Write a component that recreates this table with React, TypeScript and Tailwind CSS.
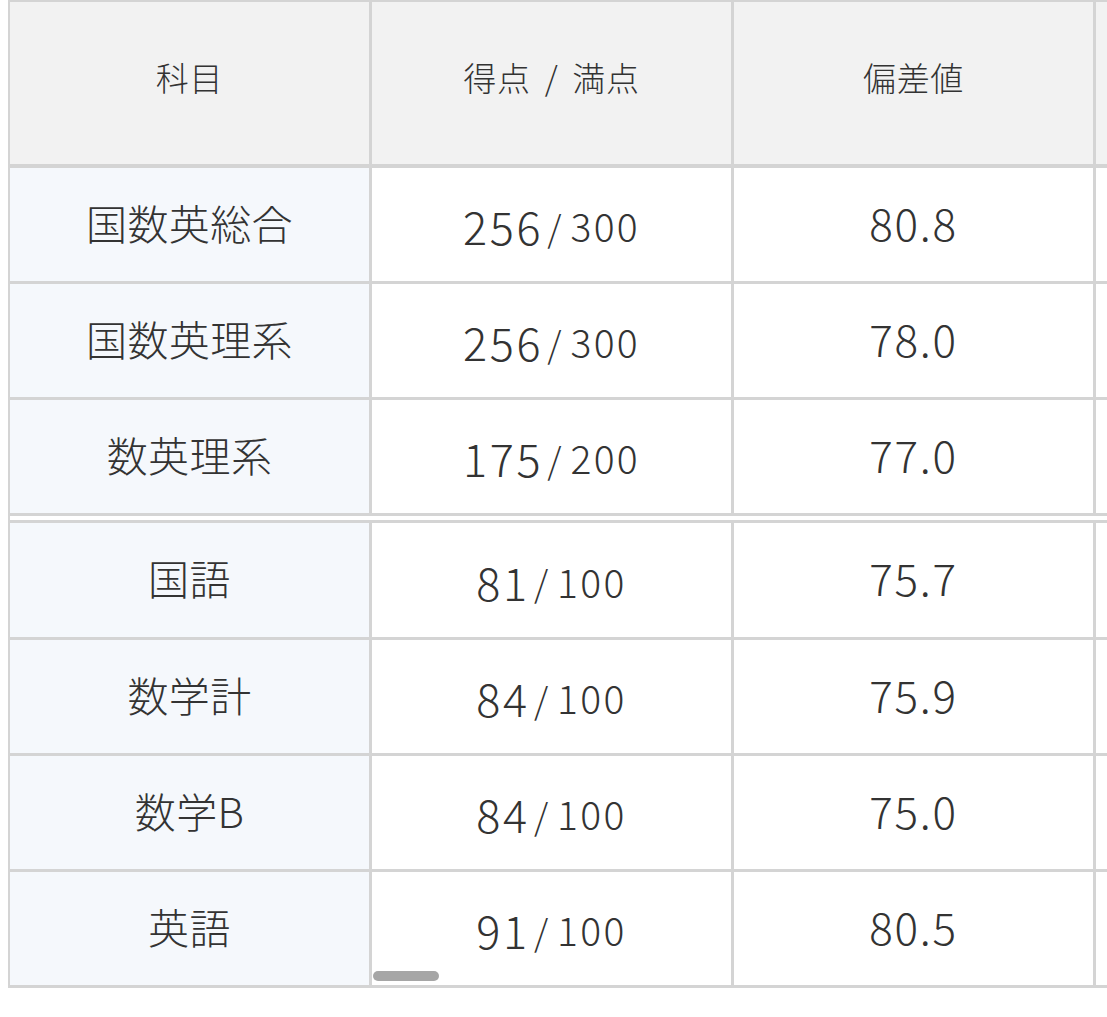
import React from "react";

const FONT = '"Noto Sans CJK JP", "Noto Sans", sans-serif';

type Row = { name: string; score: string; full: string; dev: string; gapBefore?: boolean };

const rows: Row[] = [
  { name: "国数英総合", score: "256", full: "300", dev: "80.8" },
  { name: "国数英理系", score: "256", full: "300", dev: "78.0" },
  { name: "数英理系", score: "175", full: "200", dev: "77.0" },
  { name: "国語", score: "81", full: "100", dev: "75.7", gapBefore: true },
  { name: "数学計", score: "84", full: "100", dev: "75.9" },
  { name: "数学B", score: "84", full: "100", dev: "75.0" },
  { name: "英語", score: "91", full: "100", dev: "80.5" },
];

export default function App() {
  return (
    <div
      className="relative w-[1107px] h-[1017px] overflow-hidden bg-white font-light text-[#333333]"
      style={{ fontFamily: FONT }}
    >
      <div className="ml-[8px] w-[1099px] overflow-hidden">
        <div className="w-[1200px] border-l-[2px] border-t-[2px] border-[#d4d4d4]">
          {/* header */}
          <div className="flex h-[166px] border-b-[4px] border-[#d4d4d4] bg-[#f2f2f2]">
            <div className="flex w-[362px] shrink-0 items-center justify-center border-r-[3px] border-[#d4d4d4] pb-[10px] text-[33px] tracking-[0.02em]">
              科目
            </div>
            <div className="flex w-[362px] shrink-0 items-center justify-center border-r-[3px] border-[#d4d4d4] pb-[10px] text-[33px] tracking-[0.02em]">
              <span>得点</span>
              <span className="mx-[14px]">/</span>
              <span>満点</span>
            </div>
            <div className="flex w-[362px] shrink-0 items-center justify-center border-r-[3px] border-[#d4d4d4] pb-[10px] text-[33px] tracking-[0.02em]">
              偏差値
            </div>
            <div className="w-[362px] shrink-0" />
          </div>
          {rows.map((r, i) => (
            <div
              key={i}
              className={
                "flex border-b-[3px] border-[#d4d4d4] " +
                (r.gapBefore ? "mt-[4px] border-t-[3px] h-[120px]" : "h-[116px]")
              }
            >
              <div className="flex w-[362px] shrink-0 items-center justify-center border-r-[3px] border-[#d4d4d4] bg-[#f5f8fc] pb-[4px] text-[41px] tracking-[0.01em]">
                {r.name}
              </div>
              <div className="flex w-[362px] shrink-0 items-center justify-center border-r-[3px] border-[#d4d4d4] pt-[2px]">
                <span className="text-[45px] leading-none tracking-[0.06em]">{r.score}</span>
                <span className="ml-[4px] mr-[9px] text-[36px] leading-none">/</span>
                <span className="text-[39px] leading-none tracking-[0.06em]">{r.full}</span>
              </div>
              <div className="flex w-[362px] shrink-0 items-center justify-center border-r-[3px] border-[#d4d4d4] pb-[6px] text-[44px] tracking-[0.04em]">
                {r.dev}
              </div>
              <div className="w-[362px] shrink-0" />
            </div>
          ))}
        </div>
      </div>
      <div className="absolute left-[373px] top-[971px] h-[10px] w-[66px] rounded-full bg-[#a6a6a6]" />
    </div>
  );
}
